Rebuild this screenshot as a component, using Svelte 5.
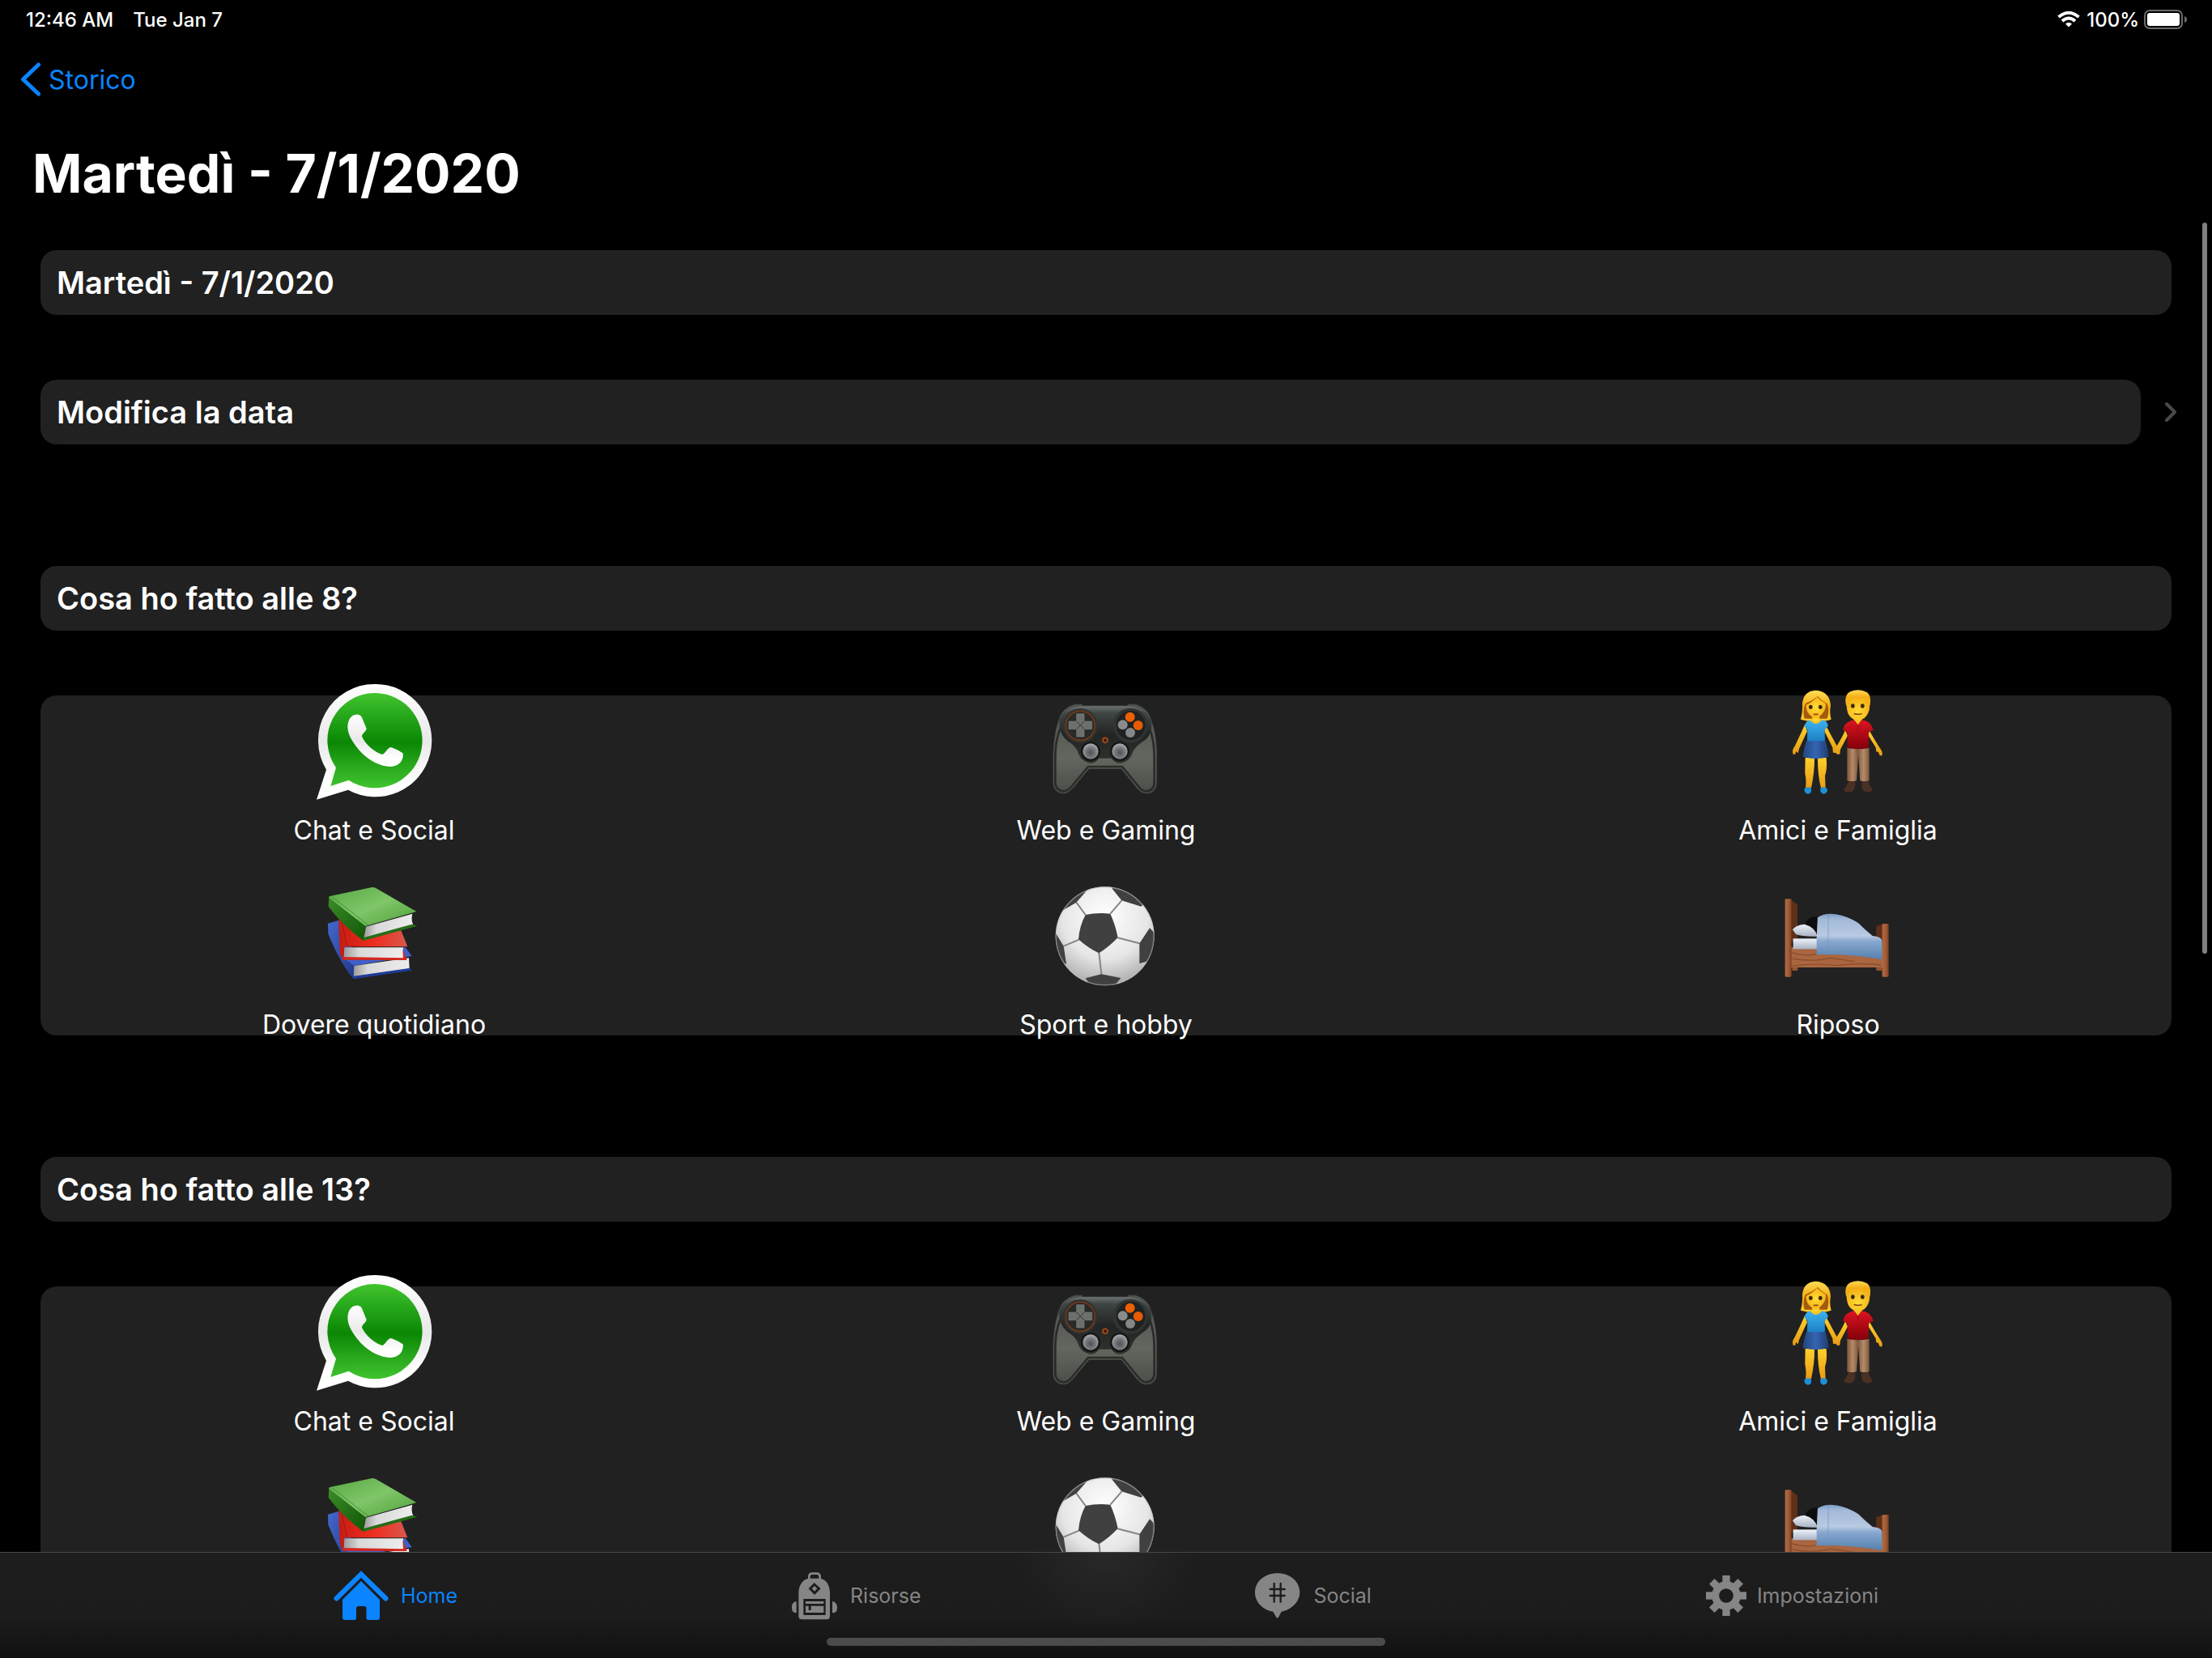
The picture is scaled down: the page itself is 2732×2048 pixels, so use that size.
<script>
  const sections = ['Cosa ho fatto alle 8?', 'Cosa ho fatto alle 13?'];
  const activities = [
    { icon: 'chat', label: 'Chat e Social' },
    { icon: 'gamepad', label: 'Web e Gaming' },
    { icon: 'couple', label: 'Amici e Famiglia' },
    { icon: 'books', label: 'Dovere quotidiano' },
    { icon: 'ball', label: 'Sport e hobby' },
    { icon: 'bed', label: 'Riposo' }
  ];
  const tabs = [
    { icon: 'home', label: 'Home', active: true },
    { icon: 'backpack', label: 'Risorse' },
    { icon: 'social', label: 'Social' },
    { icon: 'gear', label: 'Impostazioni' }
  ];
  const teeth = [0, 45, 90, 135, 180, 225, 270, 315];
</script>

<svg class="sprite" aria-hidden="true">
  <defs>
    <linearGradient id="green" x1="0" y1="0" x2="0" y2="1">
      <stop offset="0" stop-color="#42c42e" /><stop offset=".28" stop-color="#22a318" />
      <stop offset=".52" stop-color="#0b8704" /><stop offset=".75" stop-color="#27a51b" />
      <stop offset="1" stop-color="#40c42e" />
    </linearGradient>
    <linearGradient id="white" x1="0" y1="0" x2="0" y2="1">
      <stop offset="0" stop-color="#fff" /><stop offset=".5" stop-color="#e9e9e9" />
      <stop offset=".85" stop-color="#fff" />
    </linearGradient>
    <linearGradient id="bookGreen" x1="0" y1="0" x2="1" y2="1">
      <stop offset="0" stop-color="#58a844" /><stop offset=".5" stop-color="#7fc668" />
      <stop offset="1" stop-color="#4f9f3b" />
    </linearGradient>
    <linearGradient id="bookSpine" x1="0" y1="0" x2="1" y2="1">
      <stop offset="0" stop-color="#3c8c29" /><stop offset="1" stop-color="#0f5706" />
    </linearGradient>
    <linearGradient id="bookRed" x1="0" y1="0" x2="1" y2="0">
      <stop offset="0" stop-color="#c81c12" /><stop offset=".5" stop-color="#ef2c20" />
      <stop offset="1" stop-color="#d8594d" />
    </linearGradient>
    <linearGradient id="bookBlue" x1="0" y1="0" x2="1" y2="1">
      <stop offset="0" stop-color="#4468cf" /><stop offset="1" stop-color="#1f3684" />
    </linearGradient>
    <linearGradient id="pages" x1="0" y1="0" x2="1" y2="0">
      <stop offset="0" stop-color="#9b9b9b" /><stop offset=".25" stop-color="#d9d9d9" />
      <stop offset="1" stop-color="#ededed" />
    </linearGradient>
    <linearGradient id="padBody" x1="0" y1="0" x2="0" y2="1">
      <stop offset="0" stop-color="#6a7170" /><stop offset=".12" stop-color="#3f4544" />
      <stop offset=".5" stop-color="#222524" /><stop offset="1" stop-color="#30322f" />
    </linearGradient>
    <linearGradient id="padGrip" x1="0" y1="0" x2="0" y2="1">
      <stop offset="0" stop-color="#4f524e" /><stop offset=".6" stop-color="#63655f" />
      <stop offset="1" stop-color="#4b4d48" />
    </linearGradient>
    <radialGradient id="stick" cx=".5" cy=".6" r=".55">
      <stop offset="0" stop-color="#4f5254" /><stop offset=".6" stop-color="#777b7d" />
      <stop offset="1" stop-color="#a3a7a8" />
    </radialGradient>
    <radialGradient id="ballWhite" cx=".5" cy=".3" r=".72">
      <stop offset="0" stop-color="#fff" /><stop offset=".6" stop-color="#e6e6e6" />
      <stop offset="1" stop-color="#a9a9a9" />
    </radialGradient>
    <linearGradient id="hair" x1="0" y1="0" x2="0" y2="1">
      <stop offset="0" stop-color="#ffdc55" /><stop offset=".5" stop-color="#f4ad15" />
      <stop offset="1" stop-color="#ffd02e" />
    </linearGradient>
    <radialGradient id="skin" cx=".5" cy=".5" r=".6">
      <stop offset="0" stop-color="#ffdc36" /><stop offset="1" stop-color="#f4ad13" />
    </radialGradient>
    <linearGradient id="limb" x1="0" y1="0" x2="0" y2="1">
      <stop offset="0" stop-color="#ffd02c" /><stop offset="1" stop-color="#e79c14" />
    </linearGradient>
    <linearGradient id="top" x1="0" y1="0" x2="0" y2="1">
      <stop offset="0" stop-color="#3fb2ee" /><stop offset="1" stop-color="#1b80c4" />
    </linearGradient>
    <linearGradient id="skirt" x1="0" y1="0" x2="1" y2="0">
      <stop offset="0" stop-color="#22467e" /><stop offset=".5" stop-color="#3565b2" />
      <stop offset="1" stop-color="#1e3d6f" />
    </linearGradient>
    <linearGradient id="shirt" x1="0" y1="0" x2="0" y2="1">
      <stop offset="0" stop-color="#dc1420" /><stop offset="1" stop-color="#82000a" />
    </linearGradient>
    <linearGradient id="trousers" x1="0" y1="0" x2="1" y2="0">
      <stop offset="0" stop-color="#7d583d" /><stop offset=".25" stop-color="#b68b6a" />
      <stop offset=".48" stop-color="#80593e" /><stop offset=".75" stop-color="#b68b6a" />
      <stop offset="1" stop-color="#7d583d" />
    </linearGradient>
    <linearGradient id="wood" x1="0" y1="0" x2="1" y2="0">
      <stop offset="0" stop-color="#b26a42" /><stop offset=".6" stop-color="#a05b36" />
      <stop offset="1" stop-color="#7b4022" />
    </linearGradient>
    <linearGradient id="quilt" x1="0" y1="0" x2="0" y2="1">
      <stop offset="0" stop-color="#7c9fc8" /><stop offset=".12" stop-color="#a2b9d8" />
      <stop offset=".48" stop-color="#b9cae2" /><stop offset=".6" stop-color="#89a8cf" />
      <stop offset="1" stop-color="#5480ae" />
    </linearGradient>
    <linearGradient id="linen" x1="0" y1="0" x2="0" y2="1">
      <stop offset="0" stop-color="#eef3fb" /><stop offset="1" stop-color="#a8b3c2" />
    </linearGradient>
  </defs>

  <symbol id="chat" viewBox="150 72 432 432">
    <path fill="url(#white)" d="M368 75A209 209 0 1 1 270 467L153 503L189 392A209 209 0 0 1 368 75Z" />
    <path fill="url(#green)" d="M368 108A176 176 0 1 1 272 431L205 453L225 385A176 176 0 0 1 368 108Z" />
    <path fill="url(#white)" d="M299 188C309 187 317 190 321 199L338 240C336 252 321 258 321 269C333 297 368 328 397 336C407 333 415 312 427 309C443 313 462 324 473 331C477 358 457 382 425 381C392 380 353 362 324 334C294 305 268 264 268 235C268 208 281 189 299 188Z" />
  </symbol>

  <symbol id="books" viewBox="150 792 432 432">
    <path fill="url(#bookBlue)" d="M195 962L236 950L300 1090L290 1168Q240 1110 196 1000Z" />
    <path fill="#3e60ca" d="M256 1092L482 1050L506 1083L292 1118Z" />
    <path fill="url(#pages)" d="M292 1119L495 1090L497 1132L290 1163Z" />
    <path fill="#1e3b96" d="M287 1158L500 1127L505 1136L292 1168Z" />
    <path fill="#c61d14" d="M233 942L258 1046L251 1097L240 1075Z" />
    <path fill="url(#bookRed)" d="M236 945L256 1048L490 1048L466 988L320 1000Z" />
    <path fill="none" stroke="#8d1710" stroke-width="2" d="M246 952L265 1046" />
    <path fill="url(#pages)" d="M256 1051L474 1051V1093L254 1089Z" />
    <path fill="#d3281d" d="M247 1086L474 1090L472 1056L488 1098L250 1097Z" />
    <path fill="url(#bookSpine)" d="M199 862L336 970L326 1026Q250 970 197 900Z" />
    <path fill="url(#bookGreen)" d="M199 866Q197 862 205 860L358 828Q366 827 374 832L523 918L334 972Z" />
    <path fill="none" stroke="#2d7a1e" stroke-width="2" d="M210 863L344 968" />
    <path fill="url(#pages)" d="M336 974L508 926Q502 950 512 970L328 1018Z" />
    <path fill="#246d17" d="M326 1015L506 965L527 971L326 1026Z" />
  </symbol>

  <symbol id="gamepad" viewBox="162 12 432 432">
    <path fill="url(#padGrip)" stroke="#454843" stroke-width="3" d="M205 145Q215 105 262 91L288 90L290 96H458L462 90L488 91Q535 105 545 150Q562 190 565 260V385Q562 420 525 420Q510 419 495 403L435 328H315L255 400Q240 419 222 420Q186 418 183 385V270Q187 190 205 145Z" />
    <path fill="none" stroke="#2a2c29" stroke-width="8" d="M208 180Q190 225 190 285V380Q193 411 222 412Q236 411 249 396L312 321H438L500 396Q512 411 526 412Q556 411 557 380V285Q557 225 540 180" />
    <path fill="url(#padBody)" d="M205 150Q220 100 288 97H462Q530 102 545 155Q553 200 518 226Q488 245 478 265Q466 305 430 308Q410 308 398 290H352Q340 308 320 308Q284 304 272 262Q260 240 235 226Q200 195 205 150Z" />
    <circle cx="283" cy="169" r="64" fill="#303432" /><circle cx="468" cy="168" r="64" fill="#303432" />
    <circle cx="283" cy="169" r="54" fill="#272b2a" stroke="#753817" stroke-width="5" />
    <circle cx="470" cy="168" r="54" fill="#1f2222" />
    <path fill="#6b706a" stroke="#7b7f78" stroke-width="2" d="M269 125H297V153H326V182H297V210H269V182H240V153H269Z" />
    <path fill="none" stroke="#343735" stroke-width="3" d="M269 153L297 182M297 153L269 182" />
    <circle cx="467" cy="137" r="18" fill="#ec6006" /><circle cx="497" cy="168" r="18" fill="#e55b06" />
    <circle cx="440" cy="166" r="18" fill="#8a8c8c" /><circle cx="468" cy="195" r="18" fill="#858787" />
    <circle cx="375" cy="223" r="9" fill="#3c2010" stroke="#a94b16" stroke-width="5" />
    <circle cx="321" cy="265" r="36" fill="#141515" /><circle cx="429" cy="265" r="36" fill="#141515" />
    <circle cx="321" cy="264" r="29" fill="url(#stick)" /><circle cx="429" cy="264" r="29" fill="url(#stick)" />
  </symbol>

  <symbol id="ball" viewBox="162 732 432 432">
    <clipPath id="ballClip"><circle cx="374" cy="949" r="183" /></clipPath>
    <circle cx="374" cy="949" r="183" fill="url(#ballWhite)" />
    <g clip-path="url(#ballClip)">
      <path fill="none" stroke="#858585" stroke-width="6" d="M268 824L302 870M436 817L394 866M502 976L421 955M361 1091L352 1010M221 986L278 962" />
      <g fill="#404040">
        <path d="M302 870Q345 861 394 866Q412 905 422 954Q390 988 352 1012Q312 994 276 961Q280 910 302 870Z" />
        <path d="M314 772L268 824L214 856L214 765L310 740Z" /><path d="M399 771L436 817L508 839L560 790L470 740Z" />
        <path d="M540 919L502 976V1050L540 1040L570 950Z" /><path d="M302 1105L361 1090L433 1104L400 1145L330 1145Z" />
        <path d="M193 940L221 986L231 1052L190 1040L180 950Z" />
      </g>
    </g>
    <circle cx="374" cy="949" r="181" fill="none" stroke="#bdbdbd" stroke-width="4" opacity=".5" />
  </symbol>

  <symbol id="couple" viewBox="204 42 432 432">
    <g fill="url(#limb)">
      <path d="M297 195Q287 220 260 275Q248 290 254 305H262L264 294L272 301L276 285L306 220Z" />
      <path d="M372 192L415 272Q428 285 428 302L420 307L412 300L402 299L400 280L370 220Z" />
      <path d="M447 215Q440 235 415 275L412 298L424 306L430 286L456 236Z" />
      <path d="M537 218Q552 245 578 286Q588 300 582 311L574 308L570 297L562 295L560 280L532 235Z" />
      <path d="M299 318H333Q334 370 321 430H300Q304 405 298 375Z" /><path d="M345 318H377Q381 360 372 385L374 430H357Q345 385 345 318Z" />
    </g>
    <path fill="url(#hair)" d="M282 176Q290 145 288 118Q292 70 338 68Q390 72 393 125Q388 150 395 176Q360 186 338 184Q310 184 282 176Z" />
    <path fill="#a35a0c" d="M296 173Q288 148 299 118Q325 108 345 90Q360 108 380 118Q390 145 380 173Z" />
    <path fill="url(#skin)" d="M324 160H352V178Q366 184 352 193Q338 198 322 192Q312 184 324 178Z" />
    <path fill="url(#skin)" d="M302 122Q325 112 343 92Q355 106 375 117Q377 152 339 172Q300 158 302 122Z" />
    <path fill="url(#top)" d="M316 178Q324 190 338 192Q354 190 360 178Q380 180 384 199L371 215L372 258H306L307 215L295 201Q302 182 316 178Z" />
    <path fill="url(#skirt)" d="M303 256H374Q384 290 386 315Q338 328 290 315Q292 290 303 256Z" />
    <path fill="#1f8fd6" d="M296 432Q308 422 321 431Q325 449 309 452Q292 448 296 432ZM355 431Q368 422 380 432Q384 449 367 452Q351 447 355 431Z" />
    <path fill="url(#hair)" d="M450 122Q443 88 462 75Q494 58 527 75Q545 88 538 122Z" />
    <path fill="url(#skin)" d="M450 115Q455 105 457 98Q495 104 532 98Q533 108 539 115L536 142Q528 168 511 175L494 197L477 175Q458 165 454 142Z" />
    <path fill="url(#shirt)" d="M480 178L494 196L508 178Q540 180 552 215L534 222V280Q494 292 455 280V226L438 214Q446 182 480 178Z" />
    <path fill="none" stroke="#820610" stroke-width="2" d="M494 196V216" />
    <path fill="url(#trousers)" d="M454 281Q494 290 536 281V403Q520 409 502 403L496 310L489 403Q470 409 454 403Z" />
    <path fill="#4b3024" d="M459 406H484V424Q480 446 462 446Q442 446 443 434Q454 422 459 406ZM508 406H533Q538 424 547 434Q548 446 530 446Q510 444 508 425Z" />
    <g fill="#3c2a10">
      <ellipse cx="319" cy="130" rx="7" ry="8" /><ellipse cx="355" cy="130" rx="7" ry="8" />
      <ellipse cx="475" cy="126" rx="7" ry="8" /><ellipse cx="511" cy="126" rx="7" ry="8" />
    </g>
    <path fill="none" stroke="#8c4a12" stroke-width="5" stroke-linecap="round" d="M331 157H345M481 155Q495 159 507 155" />
  </symbol>

  <symbol id="bed" viewBox="204 762 432 432">
    <path fill="#5f3019" d="M245 843L270 862V1000H245ZM562 942L590 933V990H562Z" />
    <path fill="#94522f" d="M250 1090H271V1107H250ZM562 1090H584V1107H562Z" />
    <path fill="#a96640" d="M246 1020H586V1095H246Z" />
    <path fill="none" stroke="#8c4e2c" stroke-width="4" d="M248 1040Q300 1055 340 1046M250 1062Q330 1076 390 1060Q430 1064 480 1073M250 1090Q330 1078 420 1088Q500 1076 580 1086" />
    <path fill="#0d0d0f" d="M297 940Q306 906 343 906V975H310Z" />
    <path fill="url(#linen)" d="M254 988H342V1027H254Z" />
    <path fill="url(#linen)" d="M252 955Q262 938 296 935Q335 945 345 980Q290 982 264 972Z" />
    <path fill="url(#quilt)" d="M345 910Q360 896 395 896Q450 900 495 930Q520 955 548 978Q580 982 584 995L584 1066Q480 1045 341 1047V985Z" />
    <path fill="none" stroke="#7094bf" stroke-width="2" d="M384 898V1046" />
    <rect x="224" y="841" width="24" height="289" rx="4" fill="url(#wood)" />
    <rect x="584" y="933" width="24" height="197" rx="4" fill="url(#wood)" />
  </symbol>

  <symbol id="home" viewBox="0 0 68 62">
    <path fill="none" stroke="currentColor" stroke-width="6" stroke-linecap="round" stroke-linejoin="miter" d="M3.500 34.500L34 4.500L64.500 34.500" />
    <path fill="currentColor" d="M34 13L57 36V58Q57 61 54 61H43Q40.500 61 40.500 58.500V47Q40.500 44 37.500 44H31Q28 44 28 47V58.500Q28 61 25.500 61H14Q11 61 11 58V36Z" />
  </symbol>
  <symbol id="backpack" viewBox="30 40 174 180">
    <path fill="none" stroke="currentColor" stroke-width="8" d="M97 72V58Q98 48 108 48H126Q136 48 137 58V72" />
    <path fill="currentColor" fill-rule="evenodd" d="M58 120C58 85 80 66 98 66H135C155 66 174 87 174 120V206Q174 218 162 218H70Q58 218 58 206ZM116 82L95 104L117 127L140 104ZM76 142V202H158V142Z" />
    <path fill="currentColor" d="M117 94L127 104L117 114L107 104ZM84 151H151V160H84ZM84 168H95V184H104V168H151V193H84ZM50 151V194Q33 194 33 174Q33 153 50 151ZM183 151V194Q201 194 201 174Q200 153 183 151Z" />
  </symbol>
  <symbol id="social" viewBox="22 44 174 174">
    <path fill="currentColor" d="M108 48C155 48 191 78 191 119C191 153 160 184 123 190L112 211Q108 216 104 211L92 190C52 184 25 153 25 119C25 78 62 48 108 48Z" />
    <path fill="none" stroke="#1c1c1c" stroke-width="7" stroke-linecap="round" d="M96 86V154M120 86V154M81 107H135M81 131H135" />
  </symbol>
  <symbol id="gear" viewBox="33 54 156 156">
    <circle cx="111" cy="132" r="40" fill="none" stroke="currentColor" stroke-width="27" />
    {#each teeth as angle}
      <path fill="currentColor" d="M97 57H125V84H97Z" transform="rotate({angle} 111 132)" />
    {/each}
  </symbol>
</svg>

<div class="app">
  <header>
    <div class="status">
      <span>12:46 AM</span><span>Tue Jan 7</span>
      <svg class="wifi" viewBox="0 0 28 20" aria-label="Wi-Fi">
        <g fill="none" stroke="#fff" stroke-width="4"><path d="M1.500 7Q14 -3.500 26.500 7M6 12Q14 5 22 12" /></g>
        <path fill="#fff" d="M10 15.500Q14 12 18 15.500L14 19.500Z" />
      </svg>
      <span class="percent">100%</span>
      <svg class="battery" viewBox="0 0 54 24" aria-label="Batteria">
        <rect x="1" y="1" width="46" height="22" rx="6" fill="none" stroke="#6b6b6b" stroke-width="2" />
        <rect x="4" y="4" width="40" height="16" rx="3" fill="#fff" />
        <path fill="#6b6b6b" d="M50 8Q53 9 53 12T50 16Z" />
      </svg>
    </div>
    <a class="back" href="#storico">
      <svg viewBox="0 0 26 44" aria-hidden="true"><path fill="none" stroke="currentColor" stroke-width="5" stroke-linecap="round" stroke-linejoin="round" d="M22.500 4L3.500 22L22.500 40" /></svg>
      Storico
    </a>
    <h1>Martedì - 7/1/2020</h1>
  </header>

  <main>
    <div class="bar">Martedì - 7/1/2020</div>
    <a class="link" href="#data">
      <span class="bar">Modifica la data</span>
      <svg viewBox="0 0 16 26" aria-hidden="true"><path fill="none" stroke="#4a4a4d" stroke-width="4" stroke-linecap="round" stroke-linejoin="round" d="M3 3L13 13L3 23" /></svg>
    </a>
    {#each sections as title}
      <section>
        <h2 class="bar">{title}</h2>
        <div class="panel">
          <div class="grid">
            {#each activities as item}
              <button type="button">
                <svg aria-hidden="true"><use href="#{item.icon}" /></svg>
                <span>{item.label}</span>
              </button>
            {/each}
          </div>
        </div>
      </section>
    {/each}
  </main>

  <nav>
    <div class="tabs">
      {#each tabs as tab}
        <a href="#{tab.label}" class="tab {tab.icon}" class:active={tab.active}>
          <svg aria-hidden="true"><use href="#{tab.icon}" /></svg>
          {tab.label}
        </a>
      {/each}
    </div>
    <div class="indicator"></div>
  </nav>
  <div class="thumb"></div>
</div>

<style>
  :global(body) { background: #000; }
  .sprite { position: absolute; width: 0; height: 0; }
  .app {
    position: relative;
    display: flex;
    flex-direction: column;
    height: 100vh;
    overflow: hidden;
    background: #000;
    color: #fff;
    font-family: Inter, "Liberation Sans", sans-serif;
  }
  a { color: inherit; text-decoration: none; }
  h1, h2 { margin: 0; }
  header { flex: none; }
  .status {
    display: flex;
    align-items: center;
    height: 48px;
    padding: 0 30px 0 32px;
    gap: 24px;
    font-size: 24px;
    font-weight: 500;
  }
  .wifi { width: 28px; height: 20px; margin-left: auto; }
  .percent { margin: 0 -18px 0 -16px; }
  .battery { width: 54px; height: 24px; }
  .back {
    display: inline-flex;
    align-items: center;
    gap: 9px;
    height: 100px;
    padding-left: 25px;
    color: #0a84ff;
    font-size: 32px;
  }
  .back svg { width: 26px; height: 44px; }
  h1 {
    padding: 26px 40px 50px;
    font-size: 66px;
    line-height: 80px;
    font-weight: 700;
  }
  main {
    flex: 1;
    min-height: 0;
    overflow-x: hidden;
    overflow-y: auto;
    scrollbar-width: none;
    padding: 5px 50px 0;
  }
  .bar {
    display: block;
    box-sizing: border-box;
    height: 80px;
    padding: 0 20px;
    border-radius: 20px;
    background: #212121;
    font-size: 38px;
    line-height: 80px;
    font-weight: 600;
  }
  .link {
    display: flex;
    align-items: center;
    gap: 29px;
    margin: 80px -7px 0 0;
  }
  .link .bar { flex: 1; }
  .link svg { width: 16px; height: 26px; }
  section { margin-top: 150px; }
  .panel {
    display: flex;
    margin-top: 80px;
    border-radius: 20px;
    background: #212121;
  }
  .grid {
    flex: 1;
    display: grid;
    grid-template-columns: repeat(3, 1fr);
    gap: 38px 80px;
    margin: -15px 0 -7px;
  }
  button {
    display: flex;
    flex-direction: column;
    align-items: center;
    gap: 18px;
    padding: 0;
    border: 0;
    background: none;
    color: inherit;
    font: inherit;
    font-size: 32px;
    line-height: 40px;
  }
  button svg { width: 144px; height: 144px; }
  nav {
    flex: none;
    box-sizing: border-box;
    height: 131px;
    border-top: 1px solid #464646;
    background:
      radial-gradient(ellipse 120px 100px at 50% 0, #ffffff0d, transparent),
      linear-gradient(#1d1d1d, #1c1c1c 60%, #111);
  }
  .tabs {
    display: flex;
    justify-content: space-evenly;
    height: 105px;
  }
  .tab {
    display: flex;
    align-items: center;
    gap: 15px;
    color: #858585;
    font-size: 25px;
  }
  .tab.active { color: #0a84ff; }
  .tab svg { width: 58px; height: 60px; }
  .home svg { width: 68px; height: 62px; }
  .gear { gap: 12px; }
  .gear svg { width: 52px; height: 52px; }
  .indicator {
    width: 690px;
    height: 10px;
    margin: 0 auto;
    border-radius: 5px;
    background: #4b4b4b;
  }
  .thumb {
    position: absolute;
    top: 275px;
    right: 6px;
    width: 6px;
    height: 903px;
    border-radius: 3px;
    background: #808080;
  }
</style>
